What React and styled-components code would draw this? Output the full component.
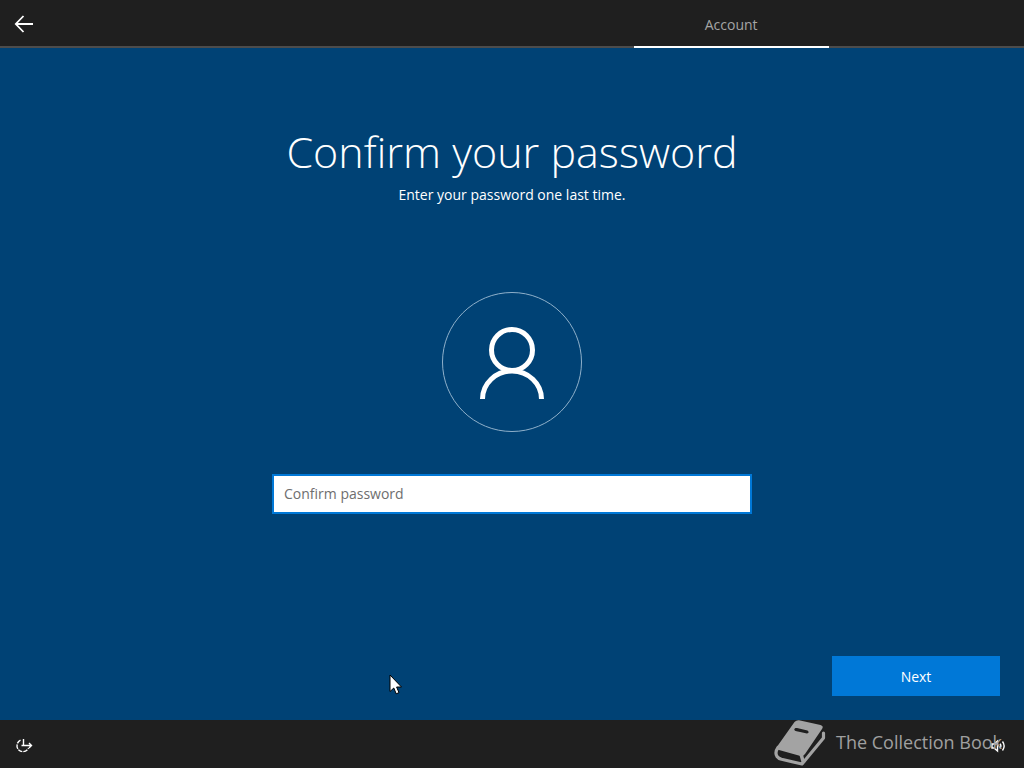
import React, { useState } from 'react';
import styled, { createGlobalStyle } from 'styled-components';

const GlobalStyle = createGlobalStyle`
* {
  box-sizing: border-box;
}
body {
  margin: 0;
  background: #004275;
  color: #fff;
  font-family: "Open Sans", "Noto Sans", sans-serif;
  font-size: 14px;
}
button, input {
  font-family: inherit;
  font-size: inherit;
}
`

const Page = styled.div`
min-height: 100vh;
display: flex;
flex-direction: column;
`

const TopBar = styled.header`
height: 48px;
display: flex;
background: #1f1f1f;
`

const IconButton = styled.button`
width: 48px;
height: 48px;
padding: 0;
display: grid;
place-items: center;
border: none;
background: transparent;
color: #fff;
cursor: pointer;
`

const BackButton = styled(IconButton)`
padding-top: 2px;
border-bottom: 2px solid #4c4c4c;
`

const Steps = styled.nav`
flex: 1;
display: grid;
grid-template-columns: repeat(5, 1fr);
`

const Step = styled.div`
display: grid;
place-items: center;
padding-top: 2px;
border-bottom: 2px solid ${({ $active }) => ($active ? '#fff' : '#4c4c4c')};
color: #a5a5a5;
`

const Main = styled.form`
flex: 1;
display: flex;
flex-direction: column;
align-items: center;
padding: 74px 24px 24px;
`

const Title = styled.h1`
margin: 0 0 2px;
font-size: 43px;
line-height: 60px;
font-weight: 300;
`

const Subtitle = styled.p`
margin: 0;
line-height: 22px;
`

const Avatar = styled.div`
width: 140px;
height: 140px;
margin: 86px 0 42px;
border: 1px solid #8fb0ca;
border-radius: 50%;
display: grid;
place-items: center;
`

const PasswordInput = styled.input`
width: 100%;
max-width: 480px;
height: 40px;
padding: 0 10px 2px;
border: 2px solid #0078d7;
border-radius: 0;
outline: none;
background: #fff;
color: #000;

&::placeholder {
  color: #6e6e6e;
  opacity: 1;
}
`

const NextButton = styled.button`
width: 168px;
height: 40px;
margin-top: auto;
align-self: flex-end;
border: none;
background: #0078d7;
color: #fff;
cursor: pointer;
`

const BottomBar = styled.footer`
position: relative;
height: 48px;
padding: 2px 2px 0 0;
display: flex;
justify-content: space-between;
background: #1f1f1f;
`

const Watermark = styled.div`
position: absolute;
right: 22px;
top: 0;
height: 48px;
display: flex;
align-items: center;
gap: 10px;
color: #a0a0a0;
font-size: 18px;
line-height: 24px;
white-space: nowrap;
pointer-events: none;
`

const WatermarkText = styled.span`
padding-bottom: 4px;
`

const Cursor = styled.svg`
position: fixed;
left: 389px;
top: 674px;
pointer-events: none;
`

function BackIcon() {
  return (
    <svg width="20" height="20" viewBox="0 0 20 20" fill="none" stroke="currentColor" strokeWidth="1.8">
      <path d="M19 10H2M9.500 2L1.800 10L9.500 18" />
    </svg>
  )
}

function PersonIcon() {
  return (
    <svg width="68" height="76" viewBox="0 0 68 76" fill="none" stroke="#fff" strokeWidth="5">
      <circle cx="34" cy="26" r="20.500" />
      <path d="M4.500 75A29.500 28 0 0 1 63.500 75" />
    </svg>
  )
}

function EaseIcon() {
  return (
    <svg width="18" height="18" viewBox="0 0 18 18" fill="none" stroke="currentColor" strokeWidth="1.400">
      <path d="M5.500 3.200A6 6 0 1 0 13.500 11" strokeDasharray="4.500 1" />
      <path d="M8.500 2V8.500H16.500M14 6L16.500 8.500L14 11M6.500 8.500H8.500" />
    </svg>
  )
}

function VolumeIcon() {
  return (
    <svg width="16" height="16" viewBox="0 0 16 16" fill="none" stroke="currentColor" strokeWidth="1.400">
      <path d="M2 6H4L7.500 3V13L4 10H2Z" />
      <path d="M10 5.700Q11.800 8 10 10.300M12.500 3.500Q15.800 8 12.500 12.500" />
    </svg>
  )
}

function BookIcon() {
  return (
    <svg width="52" height="48" viewBox="0 0 52 48">
      <path
        fill="#a3a3a3"
        fillRule="evenodd"
        d="M25 .3L46.500 5Q50 6 48 9L31 34Q29.500 36.500 26.500 36L5 30Q1.500 29 3.500 26L20.500 2Q22.500 0 25 .3ZM21.500 8Q19 9.500 21.500 11L33 13.500Q36 12.500 33.500 10.500L23 8Z"
      />
      <path
        d="M4 27.500Q.5 32.500 3 36.500Q4.500 38.500 7.500 39.300L28 44L49.500 18V13"
        fill="none"
        stroke="#a3a3a3"
        strokeWidth="3.200"
        strokeLinecap="round"
        strokeLinejoin="round"
      />
      <path d="M27 34L29.500 43" stroke="#a3a3a3" strokeWidth="3.500" />
    </svg>
  )
}

function App() {
  const [password, setPassword] = useState('');

  return (
    <Page>
      <GlobalStyle />
      <TopBar>
        <BackButton type="button" aria-label="Back"><BackIcon /></BackButton>
        <Steps>
          <Step />
          <Step />
          <Step />
          <Step $active aria-current="step">Account</Step>
          <Step />
        </Steps>
      </TopBar>
      <Main onSubmit={(e) => e.preventDefault()}>
        <Title>Confirm your password</Title>
        <Subtitle>Enter your password one last time.</Subtitle>
        <Avatar><PersonIcon /></Avatar>
        <PasswordInput
          type="password"
          aria-label="Confirm password"
          placeholder="Confirm password"
          value={password}
          onChange={(e) => setPassword(e.target.value)}
        />
        <NextButton type="submit">Next</NextButton>
      </Main>
      <BottomBar>
        <IconButton type="button" aria-label="Ease of access"><EaseIcon /></IconButton>
        <IconButton type="button" aria-label="Volume"><VolumeIcon /></IconButton>
        <Watermark>
          <BookIcon />
          <WatermarkText>The Collection Book</WatermarkText>
        </Watermark>
      </BottomBar>
      <Cursor width="14" height="22" viewBox="0 0 14 22">
        <path d="M1 1V17.500L4.800 14L7.200 19.800L10 18.600L7.600 13H12.500Z" fill="#fff" stroke="#000" />
      </Cursor>
    </Page>
  )
}

export default App;
